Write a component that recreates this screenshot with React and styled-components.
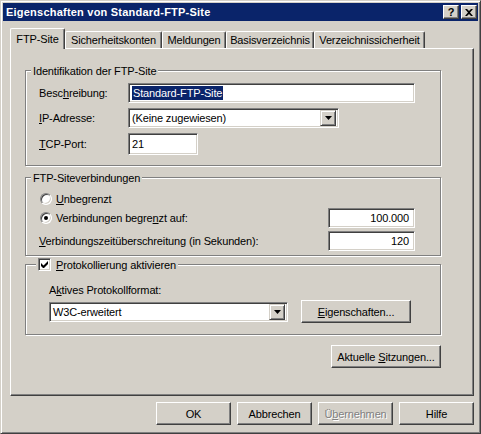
import React from "react";
import styled, { createGlobalStyle } from "styled-components";

const Global = createGlobalStyle`
    body {
        margin: 0;
        background: #d4d0c8;
        font-family: "Liberation Sans", Arial, sans-serif;
        font-size: 11px;
        letter-spacing: -0.14px;
        color: #000;
    }
`;

const Window = styled.div`
    box-sizing: border-box;
    width: 481px;
    height: 434px;
    background: #d4d0c8;
    border: 1px solid;
    border-color: #d4d0c8 #404040 #404040 #d4d0c8;
    box-shadow: inset 1px 1px #fff, inset -1px -1px #808080;
    padding: 2px;
    display: flex;
    flex-direction: column;
`;

const TitleBar = styled.div`
    height: 18px;
    background: #0a246a;
    color: #fff;
    font-weight: bold;
    display: flex;
    align-items: center;
    padding: 0 1px 0 3px;
    .title {
        flex: 1;
        letter-spacing: 0.22px;
    }
`;

const TitleButton = styled.div`
    box-sizing: border-box;
    width: 16px;
    height: 14px;
    margin-left: ${(p) => p.$gap || 0}px;
    background: #d4d0c8;
    color: #000;
    border: 1px solid;
    border-color: #fff #404040 #404040 #fff;
    box-shadow: inset -1px -1px #808080;
    display: flex;
    align-items: center;
    justify-content: center;
    font-size: 11px;
    font-weight: bold;
    line-height: 1;
`;

const Body = styled.div`
    padding: 7px 0 0 7px;
    display: flex;
    flex-direction: column;
`;

const TabStrip = styled.div`
    display: flex;
    align-items: flex-end;
    height: 20px;
`;

const Tab = styled.div`
    box-sizing: border-box;
    width: ${(p) => p.$w}px;
    height: ${(p) => (p.$active ? 21 : 17)}px;
    margin-bottom: ${(p) => (p.$active ? -1 : 0)}px;
    position: relative;
    z-index: ${(p) => (p.$active ? 1 : 0)};
    background: #d4d0c8;
    border-top: 1px solid #fff;
    border-left: 1px solid #fff;
    border-right: 1px solid #404040;
    border-radius: 2px 2px 0 0;
    box-shadow: inset -1px 0 #808080;
    display: flex;
    align-items: ${(p) => (p.$active ? "flex-start" : "center")};
    padding-top: ${(p) => (p.$active ? 4 : 0)}px;
    justify-content: center;
    white-space: nowrap;
`;

const Panel = styled.div`
    box-sizing: border-box;
    width: 464px;
    height: 348px;
    border: 1px solid;
    border-color: #fff #404040 #404040 #fff;
    box-shadow: inset -1px -1px #808080;
    padding: 21px 0 0 14px;
    display: flex;
    flex-direction: column;
`;

const Group = styled.div`
    box-sizing: border-box;
    width: 416px;
    margin-top: ${(p) => p.$mt || 0}px;
    border: 1px solid #808080;
    box-shadow: inset 1px 1px #fff, 1px 1px #fff;
    display: flex;
    flex-direction: column;
`;

const Caption = styled.div`
    align-self: flex-start;
    height: 13px;
    margin: -7px 0 0 ${(p) => p.$ml}px;
    padding: 0 2px;
    background: #d4d0c8;
    display: flex;
    align-items: center;
    gap: 5px;
    white-space: nowrap;
`;

const FormGrid = styled.div`
    display: grid;
    grid-template-columns: 89px auto;
    row-gap: 5px;
    align-items: center;
    padding: 6px 0 10px 13px;
`;

const ConnGrid = styled.div`
    display: grid;
    grid-template-columns: 1fr 87px;
    grid-template-rows: 18px 20px 20px;
    row-gap: 0;
    align-items: center;
    padding: 6px 25px 7px 13px;
    .spacer {
        margin-top: 6px;
    }
`;

const LogBlock = styled.div`
    display: flex;
    flex-direction: column;
    padding: 13px 0 11px 23px;
    .label {
        height: 13px;
        line-height: 13px;
        margin-bottom: 3px;
    }
`;

const LogRow = styled.div`
    display: flex;
    align-items: center;
    gap: 13px;
    height: 23px;
`;

const Field = styled.div`
    box-sizing: border-box;
    width: ${(p) => p.$w}px;
    height: ${(p) => p.$h || 20}px;
    background: #fff;
    border: 1px solid;
    border-color: #808080 #fff #fff #808080;
    box-shadow: inset 1px 1px #404040, inset -1px -1px #d4d0c8;
    padding: 0 ${(p) => (p.$right ? 5 : 3)}px 0 3px;
    display: flex;
    align-items: center;
    justify-content: ${(p) => (p.$right ? "flex-end" : "flex-start")};
    white-space: nowrap;
`;

const Selected = styled.span`
    background: #0a246a;
    color: #fff;
    line-height: 14px;
    padding: 0 1px;
`;

const Combo = styled(Field)`
    padding-right: 2px;
    .value {
        flex: 1;
    }
`;

const DropButton = styled.div`
    box-sizing: border-box;
    width: 16px;
    height: 16px;
    background: #d4d0c8;
    border: 1px solid;
    border-color: #d4d0c8 #404040 #404040 #d4d0c8;
    box-shadow: inset 1px 1px #fff, inset -1px -1px #808080;
    display: flex;
    align-items: center;
    justify-content: center;
`;

const Choice = styled.div`
    display: flex;
    align-items: center;
    gap: 4px;
    white-space: nowrap;
    margin-left: 1px;
`;

const Radio = styled.span`
    box-sizing: border-box;
    width: 12px;
    height: 12px;
    border-radius: 50%;
    background: #fff;
    border: 1px solid;
    border-color: #808080 #fff #fff #808080;
    box-shadow: inset 1px 1px #404040, inset -1px -1px #d4d0c8;
    display: flex;
    align-items: center;
    justify-content: center;
    &::after {
        content: "";
        width: 4px;
        height: 4px;
        border-radius: 50%;
        background: ${(p) => (p.$checked ? "#000" : "transparent")};
    }
`;

const Check = styled.span`
    box-sizing: border-box;
    width: 13px;
    height: 13px;
    background: #fff;
    border: 1px solid;
    border-color: #808080 #fff #fff #808080;
    box-shadow: inset 1px 1px #404040, inset -1px -1px #d4d0c8;
    display: flex;
    align-items: center;
    justify-content: center;
`;

const Button = styled.button`
    box-sizing: border-box;
    width: ${(p) => p.$w || 75}px;
    height: 23px;
    padding: 0;
    background: #d4d0c8;
    font: inherit;
    letter-spacing: inherit;
    color: ${(p) => (p.disabled ? "#808080" : "#000")};
    text-shadow: ${(p) => (p.disabled ? "1px 1px #fff" : "none")};
    border: 1px solid;
    border-color: #fff #404040 #404040 #fff;
    box-shadow: inset -1px -1px #808080;
    white-space: nowrap;
`;

const SessionRow = styled.div`
    width: 416px;
    display: flex;
    justify-content: flex-end;
    margin-top: 10px;
`;

const ButtonRow = styled.div`
    width: 464px;
    display: flex;
    justify-content: flex-end;
    gap: 6px;
    margin-top: 6px;
`;

const U = styled.span`
    text-decoration: underline;
`;

const Arrow = () => (
    <svg width="7" height="4" viewBox="0 0 7 4">
        <polygon points="0,0 7,0 3.5,4" fill="#000" />
    </svg>
);

const tabs = [
    { label: "FTP-Site", w: 55, active: true },
    { label: "Sicherheitskonten", w: 97 },
    { label: "Meldungen", w: 64 },
    { label: "Basisverzeichnis", w: 88 },
    { label: "Verzeichnissicherheit", w: 111 },
];

export default function App() {
    return (
        <>
            <Global />
            <Window>
                <TitleBar>
                    <span className="title">Eigenschaften von Standard-FTP-Site</span>
                    <TitleButton>?</TitleButton>
                    <TitleButton $gap={2}>
                        <svg width="8" height="7" viewBox="0 0 8 7">
                            <path d="M0 0h2l2 2 2-2h2L5 3.5 8 7H6L4 5 2 7H0l3-3.5z" fill="#000" />
                        </svg>
                    </TitleButton>
                </TitleBar>
                <Body>
                    <TabStrip>
                        {tabs.map((t) => (
                            <Tab key={t.label} $w={t.w} $active={t.active}>
                                {t.label}
                            </Tab>
                        ))}
                    </TabStrip>
                    <Panel>
                        <Group>
                            <Caption $ml={5}>Identifikation der FTP-Site</Caption>
                            <FormGrid>
                                <span>
                                    Besc<U>h</U>reibung:
                                </span>
                                <Field $w={287}>
                                    <Selected>Standard-FTP-Site</Selected>
                                </Field>
                                <span>
                                    <U>I</U>P-Adresse:
                                </span>
                                <Combo $w={211}>
                                    <span className="value">(Keine zugewiesen)</span>
                                    <DropButton>
                                        <Arrow />
                                    </DropButton>
                                </Combo>
                                <span>
                                    <U>T</U>CP-Port:
                                </span>
                                <Field $w={70} $h={22}>
                                    21
                                </Field>
                            </FormGrid>
                        </Group>

                        <Group $mt={11}>
                            <Caption $ml={5}>FTP-Siteverbindungen</Caption>
                            <ConnGrid>
                                <Choice>
                                    <Radio />
                                    <span>
                                        <U>U</U>nbegrenzt
                                    </span>
                                </Choice>
                                <span />
                                <Choice>
                                    <Radio $checked />
                                    <span>
                                        Verbindungen begre<U>n</U>zt auf:
                                    </span>
                                </Choice>
                                <Field $w={87} $right>
                                    100.000
                                </Field>
                                <span className="spacer">
                                    <U>V</U>erbindungszeitüberschreitung (in Sekunden):
                                </span>
                                <Field className="spacer" $w={87} $right>
                                    120
                                </Field>
                            </ConnGrid>
                        </Group>

                        <Group $mt={8}>
                            <Caption $ml={10}>
                                <Check>
                                    <svg width="7" height="7" viewBox="0 0 7 7">
                                        <path d="M0 2v3l2 2h1l4-4V0L2.5 4.5z" fill="#000" />
                                    </svg>
                                </Check>
                                <span>
                                    <U>P</U>rotokollierung aktivieren
                                </span>
                            </Caption>
                            <LogBlock>
                                <span className="label">
                                    A<U>k</U>tives Protokollformat:
                                </span>
                                <LogRow>
                                    <Combo $w={239}>
                                        <span className="value">W3C-erweitert</span>
                                        <DropButton>
                                            <Arrow />
                                        </DropButton>
                                    </Combo>
                                    <Button $w={110}>
                                        <U>E</U>igenschaften...
                                    </Button>
                                </LogRow>
                            </LogBlock>
                        </Group>

                        <SessionRow>
                            <Button $w={110}>
                                Aktuelle <U>S</U>itzungen...
                            </Button>
                        </SessionRow>
                    </Panel>
                    <ButtonRow>
                        <Button>OK</Button>
                        <Button>Abbrechen</Button>
                        <Button disabled>
                            Ü<U>b</U>ernehmen
                        </Button>
                        <Button>Hilfe</Button>
                    </ButtonRow>
                </Body>
            </Window>
        </>
    );
}
